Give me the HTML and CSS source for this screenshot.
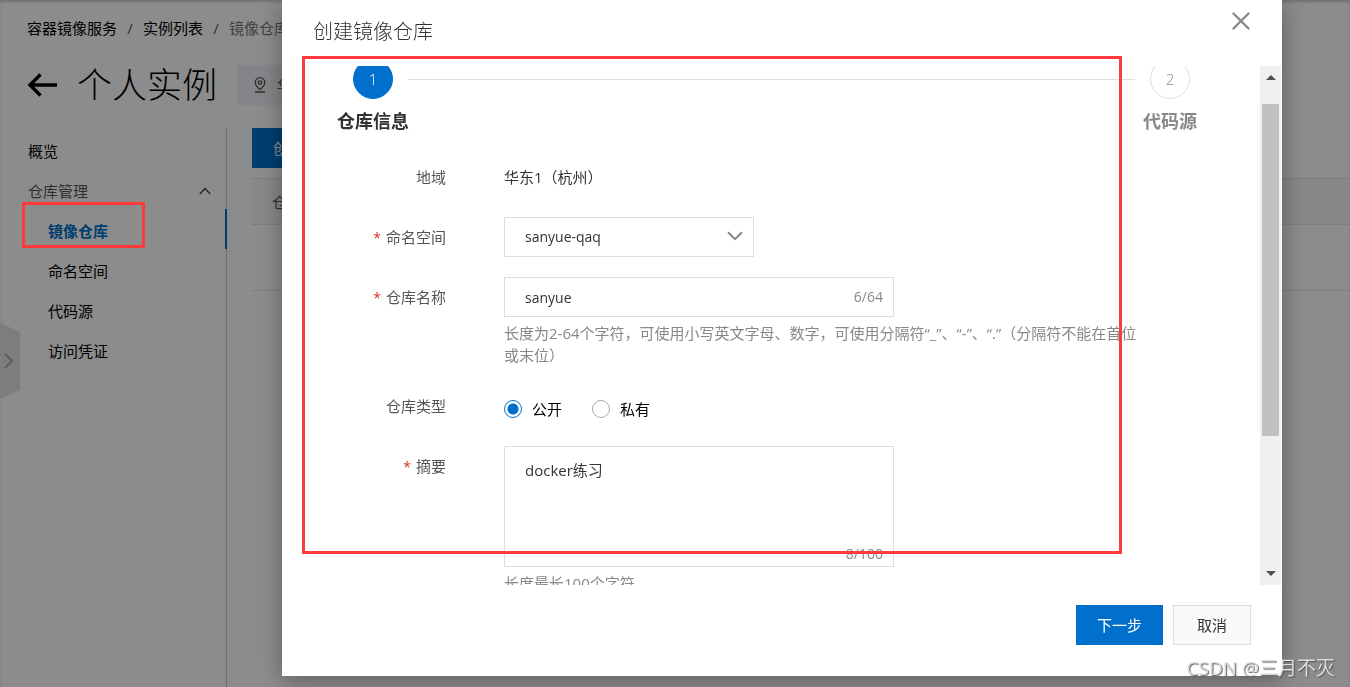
FILE: index.html
```html
<!DOCTYPE html>
<html lang="zh-CN">
<head>
<meta charset="utf-8">
<title>容器镜像服务</title>
<link rel="stylesheet" href="styles.css">
</head>
<body>
<div class="page">
  <header class="page-head">
    <nav class="crumbs" aria-label="路径">
      <a href="#">容器镜像服务</a><span class="sep">/</span><a href="#">实例列表</a><span class="sep">/</span><span class="current">镜像仓库</span>
    </nav>
    <div class="title-row">
      <a class="back" href="#" aria-label="返回">
        <svg width="30" height="24" viewBox="0 0 30 24" fill="none" stroke="#000" stroke-width="3.4"><path d="M30 12H3M13.500 1.500L3 12l10.500 10.500"/></svg>
      </a>
      <h1>个人实例</h1>
      <span class="region">
        <svg width="14" height="16" viewBox="0 0 14 16" fill="none" stroke="#555" stroke-width="1.300"><path d="M7 12.500C4 10 2.200 8 2.200 5.500a4.800 4.800 0 0 1 9.600 0C11.800 8 10 10 7 12.500zM2 15h10"/><circle cx="7" cy="5.500" r="1.700"/></svg>
        华东1
      </span>
    </div>
  </header>
  <div class="columns">
    <nav class="sidebar" aria-label="导航">
      <a href="#">概览</a>
      <a class="group" href="#">仓库管理
        <svg width="12" height="8" viewBox="0 0 12 8" fill="none" stroke="#444" stroke-width="1.400"><path d="M.8 7L6 1.500 11.200 7"/></svg>
      </a>
      <a class="child active" href="#">镜像仓库</a>
      <a class="child" href="#">命名空间</a>
      <a class="child" href="#">代码源</a>
      <a class="child" href="#">访问凭证</a>
    </nav>
    <main class="content">
      <button class="btn primary" type="button">创建镜像仓库</button>
      <table class="list">
        <thead><tr><th>仓库名称</th></tr></thead>
        <tbody><tr><td></td></tr></tbody>
      </table>
    </main>
  </div>
  <button class="handle" type="button" aria-label="展开">
    <svg width="20" height="76" viewBox="0 0 20 76"><path d="M0 0l20 9v58L0 76z" fill="#e4e4e4"/><path d="M5 31l7 7-7 7" fill="none" stroke="#aaa" stroke-width="2"/></svg>
  </button>
</div>

<div class="mask">
  <section class="dialog" role="dialog" aria-labelledby="dlg-title">
    <header class="dialog-head">
      <h2 id="dlg-title">创建镜像仓库</h2>
      <button class="close" type="button" aria-label="关闭">
        <svg width="18" height="18" viewBox="0 0 18 18" fill="none" stroke="#888" stroke-width="2.400" stroke-linecap="round"><path d="M1.500 1.500l15 15M16.500 1.500l-15 15"/></svg>
      </button>
    </header>
    <div class="dialog-body">
      <div class="scroll">
        <ol class="steps">
          <li class="step on"><span class="num">1</span><span class="name">仓库信息</span></li>
          <li class="line" aria-hidden="true"></li>
          <li class="step"><span class="num">2</span><span class="name">代码源</span></li>
        </ol>
        <form class="form">
          <div class="row">
            <span class="label">地域</span>
            <div class="value">华东1（杭州）</div>
          </div>
          <div class="row">
            <label class="label required" for="ns">命名空间</label>
            <div class="select-wrap">
              <select id="ns"><option>sanyue-qaq</option></select>
              <svg width="16" height="10" viewBox="0 0 16 10" fill="none" stroke="#888" stroke-width="2"><path d="M1 1.200l7 7 7-7"/></svg>
            </div>
          </div>
          <div class="row">
            <label class="label required" for="name">仓库名称</label>
            <div class="control">
              <div class="field">
                <input id="name" type="text" value="sanyue">
                <span class="count">6/64</span>
              </div>
              <p class="hint">长度为2-64个字符，可使用小写英文字母、数字，可使用分隔符“_”、“-”、“.”（分隔符不能在首位或末位）</p>
            </div>
          </div>
          <div class="row">
            <span class="label">仓库类型</span>
            <div class="radios">
              <label><input type="radio" name="type" checked>公开</label>
              <label><input type="radio" name="type">私有</label>
            </div>
          </div>
          <div class="row">
            <label class="label required" for="summary">摘要</label>
            <div class="control">
              <div class="field">
                <textarea id="summary">docker练习</textarea>
                <span class="count">8/100</span>
              </div>
              <p class="hint">长度最长100个字符</p>
            </div>
          </div>
        </form>
      </div>
      <div class="scrollbar" aria-hidden="true">
        <svg width="10" height="5" viewBox="0 0 10 5"><path d="M0 5l5-5 5 5z" fill="#505050"/></svg>
        <div class="track"><div class="thumb"></div></div>
        <svg width="10" height="5" viewBox="0 0 10 5"><path d="M0 0l5 5 5-5z" fill="#505050"/></svg>
      </div>
    </div>
    <footer class="dialog-foot">
      <button class="btn primary" type="button">下一步</button>
      <button class="btn" type="button">取消</button>
    </footer>
  </section>
</div>
<div class="mark mark-menu"></div>
<div class="mark mark-form"></div>
<div class="watermark">CSDN @三月不灭</div>
</body>
</html>
```

FILE: styles.css
```css
* { box-sizing: border-box; }
body {
  margin: 0;
  height: 100vh;
  overflow: hidden;
  background: #fff;
  color: #333;
  font: 400 15px/22px "Open Sans", "Noto Sans CJK SC", sans-serif;
  text-spacing-trim: space-all;
}
h1, h2, p, ol { margin: 0; padding: 0; font-weight: 300; }
a { color: #000; text-decoration: none; }
button, input, select, textarea { font: inherit; color: inherit; margin: 0; }
svg { display: block; flex: none; }

.page {
  display: flex;
  flex-direction: column;
  height: 100%;
  box-shadow: inset 0 3px 4px -2px rgba(0, 0, 0, .3);
}
.page-head { padding: 17px 27px 0; }
.crumbs { display: flex; white-space: nowrap; }
.crumbs .sep { width: 26px; text-align: center; color: #555; }
.crumbs .current { color: #777; }
.title-row { display: flex; align-items: center; gap: 20px; height: 66px; margin-bottom: 23px; padding-top: 26px; }
.title-row h1 { font-size: 35px; line-height: 40px; color: #000; white-space: nowrap; }
.region {
  display: flex;
  align-items: center;
  gap: 10px;
  height: 40px;
  padding: 0 16px;
  border-radius: 2px;
  background: #f0f3f7;
  color: #555;
  font-size: 13px;
}
.columns { display: flex; flex: 1; }
.sidebar {
  flex: none;
  width: 227px;
  padding-top: 1px;
  border-right: 1px solid #c8c8c8;
}
.sidebar a { display: flex; align-items: center; height: 40px; padding: 3px 0 0 28px; }
.sidebar .group { justify-content: space-between; padding-right: 15px; color: #555; }
.sidebar .child { padding-left: 48px; }
.sidebar .active { margin-right: -1px; border-right: 2px solid #0070cc; color: #0070cc; font-weight: 700; }
.content { flex: 1; padding-left: 25px; }
.list { width: 100%; margin-top: 10px; border-collapse: collapse; }
.list th { height: 46px; padding: 0 20px; background: #f7f7f7; border: solid #e4e4e4; border-width: 1px 0; text-align: left; font-weight: 400; color: #555; }
.list td { height: 66px; border-bottom: 1px solid #e4e4e4; }
.handle { position: fixed; left: 0; top: 323px; padding: 0; border: 0; background: none; }

.btn {
  height: 40px;
  padding: 0 23px;
  border: 1px solid #dedede;
  background: #fafafa;
  color: #333;
}
.btn.primary { padding: 0 21px; border: 0; background: #0070cc; color: #fff; }

.mask {
  position: fixed;
  inset: 0;
  display: flex;
  padding: 0 68px 11px 282px;
  background: rgba(0, 0, 0, .45);
}
.dialog {
  flex: 1;
  display: flex;
  flex-direction: column;
  min-width: 0;
  background: #fff;
  box-shadow: 0 4px 24px rgba(0, 0, 0, .35);
}
.dialog-head { display: flex; justify-content: space-between; height: 66px; padding: 12px 32px 0 31px; }
.dialog-head h2 { font-size: 20px; line-height: 40px; }
.close { height: 18px; padding: 0; border: 0; background: none; }
.dialog-body { flex: 1; display: flex; min-height: 0; padding-right: 1px; }
.scroll { flex: 1; overflow: hidden; padding: 0 30px 0 31px; }
.steps { display: flex; margin-top: -7px; list-style: none; }
.step { width: 120px; display: flex; flex-direction: column; align-items: center; gap: 8px; color: #888; }
.step .num {
  width: 40px;
  height: 40px;
  border: 1px solid #dedede;
  border-radius: 50%;
  line-height: 38px;
  text-align: center;
}
.step .name { font-size: 18px; line-height: 28px; font-weight: 700; }
.step.on { color: #333; }
.step.on .num { border-color: #0070cc; background: #0070cc; color: #fff; }
.line { flex: 1; height: 1px; margin: 20px -25px 0; background: #dedede; }

.form { display: flex; flex-direction: column; gap: 20px; margin-top: 22px; }
.row { display: flex; gap: 58px; min-height: 40px; }
.label { flex: none; width: 133px; text-align: right; line-height: 40px; color: #555; }
.required::before { content: "*"; margin-right: 5px; color: #d93026; font-size: 14px; line-height: 22px; }
.value { line-height: 40px; }
.control { width: 640px; min-width: 0; }
.field, .select-wrap { position: relative; width: 390px; max-width: 100%; }
.select-wrap { width: 250px; height: 40px; }
.select-wrap svg { position: absolute; right: 11px; top: 14px; pointer-events: none; }
select, .field input, textarea {
  display: block;
  width: 100%;
  height: 40px;
  padding: 0 20px;
  border: 1px solid #dedede;
  border-radius: 0;
  background: #fff;
  appearance: none;
  outline: 0;
  resize: none;
  font-size: 14px;
}
.field textarea { height: 121px; padding: 12px 20px; overflow: hidden; font-size: 15px; }
.count { position: absolute; right: 11px; bottom: 9px; color: #888; font-size: 14px; }
textarea + .count { bottom: 2px; }
.hint { padding-top: 5px; color: #888; font-weight: 400; }
.radios { display: flex; gap: 30px; height: 40px; color: #000; }
.radios label { display: flex; align-items: center; gap: 10px; height: 46px; }
.radios input { appearance: none; width: 18px; height: 18px; border: 1px solid #aaa; border-radius: 50%; background: #fff; }
.radios input:checked { border-color: #0070cc; background: radial-gradient(circle, #0070cc 5px, #fff 6px); }

.scrollbar { width: 21px; display: flex; flex-direction: column; align-items: center; padding: 9px 0; gap: 24px; background: #f0f0f0; }
.scrollbar .track { flex: 1; width: 17px; }
.scrollbar .thumb { height: 75%; background: #c1c1c1; }
.dialog-foot { display: flex; justify-content: flex-end; gap: 10px; padding: 20px 31px 31px; }

.mark { position: fixed; border: 3px solid #ff3a3a; pointer-events: none; }
.mark-menu { left: 22px; top: 202px; width: 123px; height: 46px; }
.mark-form { left: 302px; top: 56px; width: 820px; height: 498px; }
.watermark {
  position: fixed;
  right: 15px;
  bottom: 6px;
  color: #dcdcdc;
  font-size: 19px;
  line-height: 26px;
  text-shadow: 1px 1px 1px #555;
}
```
